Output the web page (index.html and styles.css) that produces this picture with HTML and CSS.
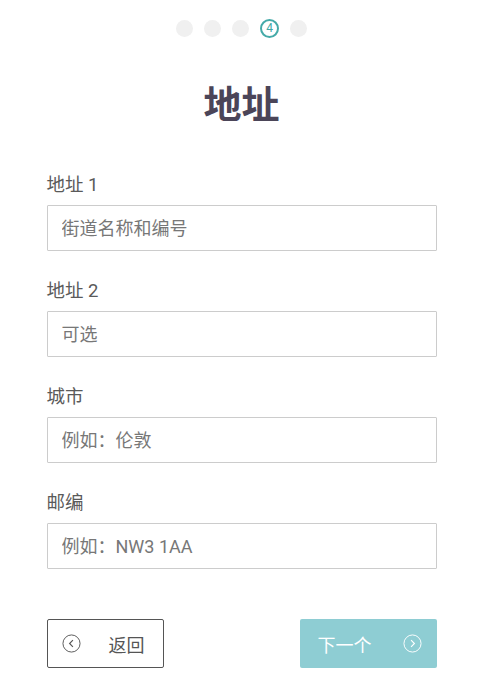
FILE: index.html
```html
<!DOCTYPE html>
<html lang="zh">
<head>
	<meta charset="UTF-8">
	<meta name="viewport" content="width=device-width, initial-scale=1.0">
	<title>地址</title>
	<link rel="stylesheet" href="styles.css">
</head>
<body>
	<main class="container">
		<ol class="steps">
			<li class="step"></li>
			<li class="step"></li>
			<li class="step"></li>
			<li class="step active">4</li>
			<li class="step"></li>
		</ol>

		<h1 class="title">地址</h1>

		<form class="form">
			<div class="field">
				<label class="label" for="addr1">地址 1</label>
				<input class="input" id="addr1" type="text" placeholder="街道名称和编号">
			</div>
			<div class="field">
				<label class="label" for="addr2">地址 2</label>
				<input class="input" id="addr2" type="text" placeholder="可选">
			</div>
			<div class="field">
				<label class="label" for="city">城市</label>
				<input class="input" id="city" type="text" placeholder="例如：伦敦">
			</div>
			<div class="field">
				<label class="label" for="zip">邮编</label>
				<input class="input" id="zip" type="text" placeholder="例如：NW3 1AA">
			</div>

			<div class="actions">
				<button class="btn btn-back" type="button">
					<svg class="icon" viewBox="0 0 20 20" width="19" height="19">
						<circle cx="10" cy="10" r="9" fill="none" stroke="currentColor" stroke-width="1"/>
						<path d="M11.5 6.5 L8 10 L11.5 13.5" fill="none" stroke="currentColor" stroke-width="1.2"/>
					</svg>
					<span>返回</span>
				</button>
				<button class="btn btn-next" type="submit">
					<span>下一个</span>
					<svg class="icon" viewBox="0 0 20 20" width="19" height="19">
						<circle cx="10" cy="10" r="9" fill="none" stroke="currentColor" stroke-width="1"/>
						<path d="M8.5 6.5 L12 10 L8.5 13.5" fill="none" stroke="currentColor" stroke-width="1.2"/>
					</svg>
				</button>
			</div>
		</form>
	</main>
</body>
</html>
```

FILE: styles.css
```css
body {
  margin: 0;
  background: #ffffff;
  font-family: Roboto, "Noto Sans CJK SC", sans-serif;
  color: #555555;
}

.container {
  width: 390px;
  margin: 0 auto;
  padding-top: 20px;
}

.steps {
  list-style: none;
  margin: 0;
  padding: 0;
  display: flex;
  justify-content: center;
  gap: 11px;
}

.step {
  width: 17px;
  height: 17px;
  border-radius: 50%;
  background: #f0f0f0;
  box-sizing: border-box;
  font-size: 12px;
  line-height: 15px;
  text-align: center;
  color: #3ea7a5;
}

.step.active {
  background: #ffffff;
  border: 2px solid #45aaa8;
  width: 19px;
  height: 19px;
  margin-top: -1px;
}

.title {
  margin: 42px 0 43px;
  text-align: center;
  font-size: 38px;
  line-height: 50px;
  font-weight: 700;
  color: #4b4558;
}

.field {
  margin-bottom: 28px;
}

.label {
  display: block;
  font-size: 18.5px;
  line-height: 24px;
  margin-bottom: 8px;
  color: #5a5a5a;
}

.input {
  display: block;
  width: 100%;
  height: 46px;
  box-sizing: border-box;
  border: 1px solid #cccccc;
  border-radius: 1px;
  padding: 0 14px;
  font-family: Roboto, "Noto Sans CJK JP", sans-serif;
  font-size: 18px;
  color: #555555;
}

.input::placeholder {
  color: #777777;
}

.actions {
  display: flex;
  justify-content: space-between;
  margin-top: 50px;
}

.btn {
  display: flex;
  align-items: center;
  height: 49px;
  box-sizing: border-box;
  font-family: inherit;
  font-size: 18px;
  border-radius: 2px;
  padding: 0 14px;
  cursor: pointer;
}

.btn-back {
  width: 117px;
  background: #ffffff;
  border: 1px solid #555555;
  color: #555555;
  gap: 28px;
}

.btn-next {
  width: 137px;
  background: #8ecdd3;
  border: none;
  color: #ffffff;
  justify-content: space-between;
  padding: 0 15px 0 18px;
}

.icon {
  display: block;
}
```
